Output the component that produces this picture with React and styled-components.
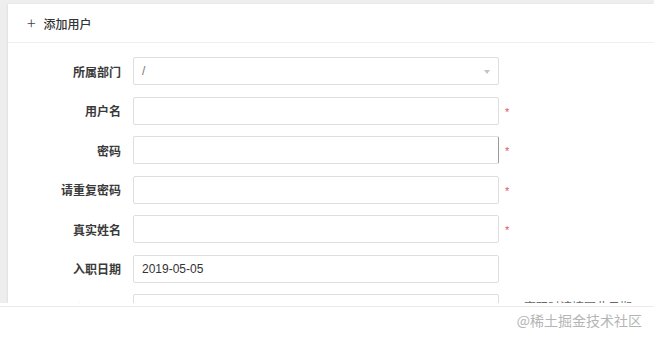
import React from 'react';
import styled, { createGlobalStyle } from 'styled-components';

const GlobalStyle = createGlobalStyle`
  html, body {
    margin: 0;
    padding: 0;
    background: #ffffff;
    font-family: "Liberation Sans", "Noto Sans CJK SC", sans-serif;
  }
`;

const Page = styled.div`
  width: 654px;
  height: 341px;
  display: flex;
  flex-direction: column;
  overflow: hidden;
`;

const Screen = styled.div`
  height: 303px;
  flex-shrink: 0;
  overflow: hidden;
  background: #eeeeee;
  padding: 4px 0 0 8px;
  box-sizing: border-box;
`;

const Card = styled.div`
  background: #ffffff;
  height: 100%;
  box-shadow: -1px 0 2px rgba(0, 0, 0, 0.06);
`;

const CardHeader = styled.div`
  height: 38px;
  display: flex;
  align-items: center;
  gap: 8px;
  padding-left: 19px;
  border-bottom: 1px solid #efefef;
  font-family: "Noto Sans CJK SC", sans-serif;
  font-size: 12px;
  font-weight: 500;
  color: #333333;
`;

const Plus = styled.span`
  font-size: 16px;
  font-weight: 300;
  line-height: 1;
  color: #444444;
  margin-top: -2px;
`;

const Form = styled.div`
  display: flex;
  flex-direction: column;
  gap: 11.5px;
  padding-top: 14px;
`;

const Row = styled.div`
  display: flex;
  align-items: center;
  height: 28px;
`;

const Label = styled.label`
  width: 125px;
  text-align: right;
  padding-right: 12px;
  box-sizing: border-box;
  font-family: "Noto Sans CJK SC", sans-serif;
  font-size: 12px;
  font-weight: 700;
  color: #3a3a3a;
`;

const Field = styled.div`
  position: relative;
  width: 366px;
  height: 28px;
  box-sizing: border-box;
  border: 1px solid #dedede;
  border-right-color: ${(p) => (p.$focus ? '#9a9a9a' : '#dedede')};
  border-radius: 2px;
  display: flex;
  align-items: center;
  padding-left: 8px;
  font-size: 12px;
  color: ${(p) => (p.$muted ? '#777777' : '#333333')};
  background: #ffffff;
`;

const Arrow = styled.span`
  position: absolute;
  right: 8px;
  top: 12px;
  width: 0;
  height: 0;
  border-left: 3px solid transparent;
  border-right: 3px solid transparent;
  border-top: 4px solid #c4c4c4;
`;

const Star = styled.span`
  margin-left: 6px;
  color: #e8505b;
  font-size: 11px;
  margin-top: 2px;
`;

const Hint = styled.span`
  align-self: flex-start;
  margin: 5px 0 0 25px;
  line-height: 16px;
  font-family: "Noto Sans CJK SC", sans-serif;
  font-size: 12px;
  color: #666666;
  white-space: nowrap;
`;

const Footer = styled.div`
  flex: 1;
  margin-top: 3px;
  border-top: 1px solid #ececec;
  display: flex;
  justify-content: flex-end;
  align-items: center;
  padding: 0 12px 8px 0;
`;

const Watermark = styled.span`
  font-family: "Noto Sans CJK SC", sans-serif;
  font-size: 14px;
  color: #b5b5b5;
`;

const fields = [
  { label: '所属部门', value: '/', select: true, muted: true },
  { label: '用户名', required: true },
  { label: '密码', required: true, focus: true },
  { label: '请重复密码', required: true },
  { label: '真实姓名', required: true },
  { label: '入职日期', value: '2019-05-05' },
  { label: '离职日期', hint: '离职时请填写此日期' },
];

export default function App() {
  return (
    <>
      <GlobalStyle />
      <Page>
        <Screen>
          <Card>
            <CardHeader>
              <Plus>+</Plus>
              添加用户
            </CardHeader>
            <Form>
              {fields.map((f) => (
                <Row key={f.label}>
                  <Label>{f.label}</Label>
                  <Field $focus={f.focus} $muted={f.muted}>
                    {f.value}
                    {f.select && <Arrow />}
                  </Field>
                  {f.required && <Star>*</Star>}
                  {f.hint && <Hint>{f.hint}</Hint>}
                </Row>
              ))}
            </Form>
          </Card>
        </Screen>
        <Footer>
          <Watermark>@稀土掘金技术社区</Watermark>
        </Footer>
      </Page>
    </>
  );
}
